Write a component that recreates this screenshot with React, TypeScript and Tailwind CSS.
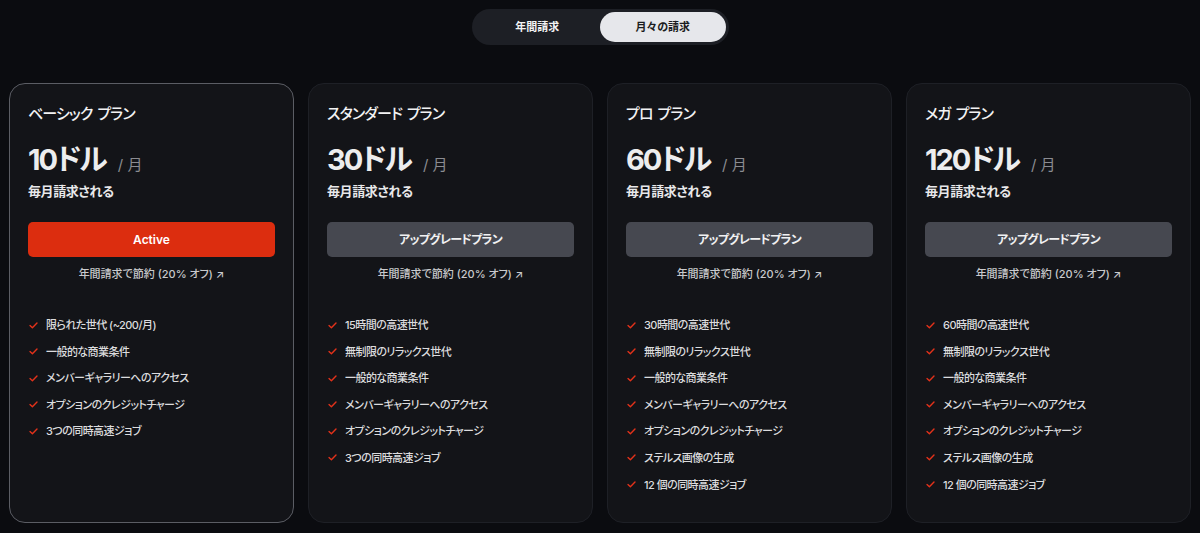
import React from "react";

type Plan = {
  name: string;
  price: string;
  active?: boolean;
  features: string[];
};

const plans: Plan[] = [
  {
    name: "ベーシック プラン",
    price: "10ドル",
    active: true,
    features: [
      "限られた世代 (~200/月)",
      "一般的な商業条件",
      "メンバーギャラリーへのアクセス",
      "オプションのクレジットチャージ",
      "3つの同時高速ジョブ",
    ],
  },
  {
    name: "スタンダード プラン",
    price: "30ドル",
    features: [
      "15時間の高速世代",
      "無制限のリラックス世代",
      "一般的な商業条件",
      "メンバーギャラリーへのアクセス",
      "オプションのクレジットチャージ",
      "3つの同時高速ジョブ",
    ],
  },
  {
    name: "プロ プラン",
    price: "60ドル",
    features: [
      "30時間の高速世代",
      "無制限のリラックス世代",
      "一般的な商業条件",
      "メンバーギャラリーへのアクセス",
      "オプションのクレジットチャージ",
      "ステルス画像の生成",
      "12 個の同時高速ジョブ",
    ],
  },
  {
    name: "メガ プラン",
    price: "120ドル",
    features: [
      "60時間の高速世代",
      "無制限のリラックス世代",
      "一般的な商業条件",
      "メンバーギャラリーへのアクセス",
      "オプションのクレジットチャージ",
      "ステルス画像の生成",
      "12 個の同時高速ジョブ",
    ],
  },
];

const Check = () => (
  <svg width="9" height="7" viewBox="0 0 9 7" fill="none" className="shrink-0">
    <path d="M1 3.6 L3.4 5.8 L8 1" stroke="#e3321a" strokeWidth="1.4" strokeLinecap="round" strokeLinejoin="round" />
  </svg>
);

const PlanCard = ({ plan }: { plan: Plan }) => (
  <div
    className={
      plan.active
        ? "flex h-full flex-col rounded-2xl border border-[#5b5d64] bg-[#131418] px-[18px] pt-5"
        : "flex h-full flex-col rounded-2xl border border-[#1e2026] bg-[#131418] px-[18px] pt-5"
    }
  >
    <div className="text-[15px] leading-5 font-medium tracking-[-0.06em] [word-spacing:0.12em] text-[#f2f2f3]">
      {plan.name}
    </div>
    <div className="mt-[18px] flex items-baseline gap-[12px]">
      <span className="text-[29px] leading-9 font-bold tracking-[-0.07em] text-[#ededee]">{plan.price}</span>
      <span className="text-[15px] text-[#8b8c91]">/ 月</span>
    </div>
    <div className="mt-1 text-[13px] leading-[18px] font-semibold tracking-[-0.03em] text-[#e8e8ea]">毎月請求される</div>
    {plan.active ? (
      <button className="mt-[22px] h-[35px] w-full rounded-[5px] bg-[#dc2d0f] text-[12px] font-semibold text-white">
        Active
      </button>
    ) : (
      <button className="mt-[22px] h-[35px] w-full rounded-[5px] bg-[#464850] text-[12px] font-semibold tracking-[-0.06em] text-[#f1f1f2]">
        アップグレードプラン
      </button>
    )}
    <div className="mt-[9px] text-center text-[11px] leading-4 font-medium text-[#c9cacd]">
      年間請求で節約 (20% オフ) ↗
    </div>
    <ul className="mt-[35px] flex flex-col gap-[10.6px]">
      {plan.features.map((f) => (
        <li key={f} className="flex items-center gap-[8px] pl-[1px] text-[11px] leading-4 font-medium tracking-[-0.05em] text-[#dcdcde]">
          <Check />
          <span>{f}</span>
        </li>
      ))}
    </ul>
  </div>
);

export default function App() {
  return (
    <div
      className="flex h-[533px] w-full flex-col items-center overflow-hidden bg-[#0b0c10] [font-feature-settings:'palt']"
      style={{ fontFamily: 'Inter, "Noto Sans CJK JP", sans-serif' }}
    >
      <div className="mt-[9px] grid h-9 w-[257px] grid-cols-2 rounded-full bg-[#1d1f25] p-[3px]">
        <button className="rounded-full text-[11px] font-semibold text-[#f3f3f4]">年間請求</button>
        <button className="rounded-full bg-[#e6e7eb] text-[11px] font-semibold text-[#1b1c20]">月々の請求</button>
      </div>
      <div className="mt-[38px] grid h-[440px] w-full grid-cols-4 gap-[14px] px-[9px]">
        {plans.map((p) => (
          <PlanCard key={p.name} plan={p} />
        ))}
      </div>
    </div>
  );
}
